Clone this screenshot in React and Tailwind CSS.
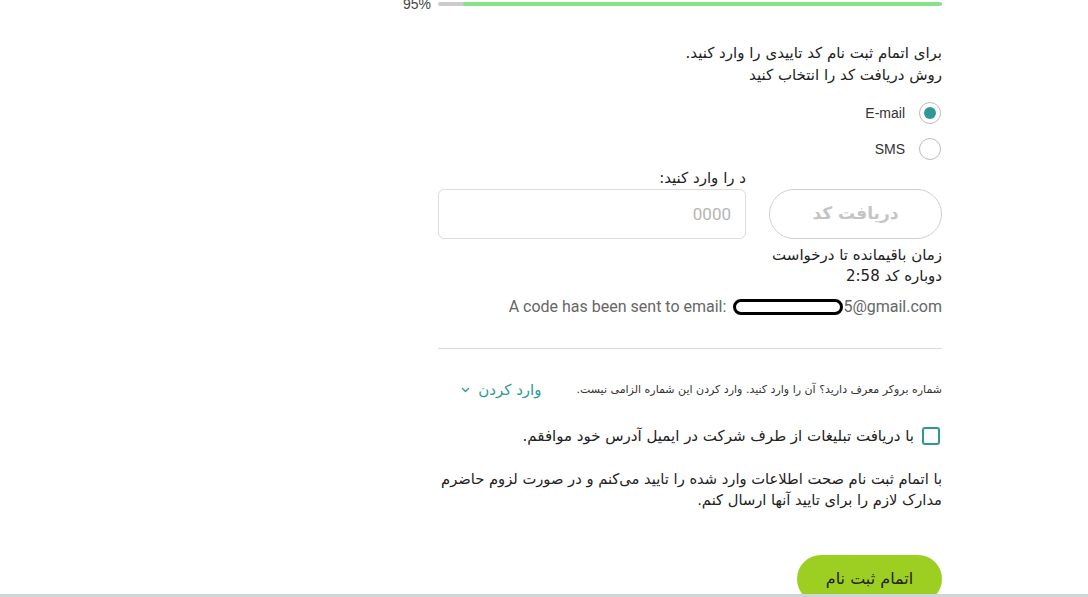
import React, { useState } from 'react';

const fa = { fontFamily: '"DejaVu Sans", Tahoma, sans-serif' };

const Radio = ({ label, checked, onClick }) => (
  <button onClick={onClick} className="flex items-center gap-[14px] h-[36px]">
    <span className="w-[22px] h-[22px] rounded-full border border-[#b9bcc4] flex items-center justify-center">
      {checked && <span className="w-[12px] h-[12px] rounded-full bg-[#2f9896]" />}
    </span>
    <span className="text-[14px] text-[#333] font-['Liberation_Sans',sans-serif]">{label}</span>
  </button>
);

const App = () => {
  const [method, setMethod] = useState('email');
  const [agree, setAgree] = useState(false);

  return (
    <div className="min-h-screen bg-white text-[#222] flex" style={fa}>
      {/* sidebar area (empty in this view) */}
      <aside className="w-[292px] shrink-0" />
      <main dir="rtl" className="flex-1 flex justify-center">
        <div className="w-[504px] -mt-[6px]">
          {/* progress */}
          <div className="relative h-[20px] flex items-center">
            <div className="w-full h-[4px] bg-[#cccccc] rounded-full overflow-hidden">
              <div className="h-full bg-[#86e388] rounded-full" style={{ width: '95%' }} />
            </div>
            <span className="absolute right-full mr-[7px] text-[14px] text-[#444] font-['Liberation_Sans',sans-serif]" dir="ltr">95%</span>
          </div>

          <p className="mt-[28px] text-[15px] leading-[22px]">
            برای اتمام ثبت نام کد تاییدی را وارد کنید.
            <br />
            روش دریافت کد را انتخاب کنید
          </p>

          <div className="mt-[9px] flex flex-col items-start mr-[1px]">
            <Radio label="E-mail" checked={method === 'email'} onClick={() => setMethod('email')} />
            <Radio label="SMS" checked={method === 'sms'} onClick={() => setMethod('sms')} />
          </div>

          <div className="mt-0 flex gap-[23px]">
            <div className="w-[173px] flex flex-col">
              <div className="h-[22px]" />
              <button className="h-[50px] rounded-full border border-[#cfcfcf] text-[17px] font-bold text-[#c4c4c4]">
                دریافت کد
              </button>
              <p className="mt-[6px] text-[15px] leading-[21px]">
                زمان باقیمانده تا درخواست دوباره کد 2:58
              </p>
            </div>
            <div className="flex-1 flex flex-col overflow-hidden">
              <label className="h-[22px] text-[15px] leading-[22px] whitespace-nowrap overflow-hidden">د را وارد کنید:</label>
              <input
                dir="ltr"
                placeholder="0000"
                className="h-[50px] w-full rounded-[6px] border border-[#dcdcdc] px-[14px] text-right text-[17px] placeholder:text-[#b5b5b5] outline-none font-['Roboto',sans-serif]"
              />
            </div>
          </div>

          <p dir="ltr" className="mt-[8px] text-[16px] text-[#666] font-['Roboto',sans-serif] flex items-center justify-end">
            A code has been sent to email:
            <span className="inline-block w-[110px] h-[16px] rounded-full border-[3px] border-black ml-[7px]" />
            5@gmail.com
          </p>

          <hr className="mt-[29px] border-0 h-px bg-[#d9d9d9]" />

          <div className="mt-[30px] flex items-center gap-[35px]">
            <span className="text-[11px] text-[#333] whitespace-nowrap">شماره بروکر معرف دارید؟ آن را وارد کنید. وارد کردن این شماره الزامی نیست.</span>
            <button className="flex items-center gap-[8px] text-[15px] text-[#2c9a98] whitespace-nowrap">
              وارد کردن
              <svg width="9" height="6" viewBox="0 0 9 6" fill="none" stroke="#2c9a98" strokeWidth="1.3">
                <path d="M1 1l3.5 3.5L8 1" />
              </svg>
            </button>
          </div>

          <label className="mt-[23px] flex items-center gap-[8px] mr-[2px] cursor-pointer">
            <span
              onClick={() => setAgree(!agree)}
              className="w-[18px] h-[18px] rounded-[3px] border-2 border-[#2f9896] flex items-center justify-center"
            >
              {agree && <span className="w-[8px] h-[8px] bg-[#2f9896]" />}
            </span>
            <span className="text-[15px]">با دریافت تبلیغات از طرف شرکت در ایمیل آدرس خود موافقم.</span>
          </label>

          <p className="mt-[21px] text-[14.7px] leading-[21px]">
            با اتمام ثبت نام صحت اطلاعات وارد شده را تایید می‌کنم و در صورت لزوم حاضرم مدارک لازم را برای تایید آنها ارسال کنم.
          </p>

          <button className="mt-[45px] w-[145px] h-[48px] rounded-full bg-[#9ccf22] text-[16px] text-[#222]">
            اتمام ثبت نام
          </button>
          <div className="h-[40px]" />
        </div>
      </main>
      <div className="fixed bottom-0 left-0 right-0 h-[3px] bg-[#cfd6d6]" />
    </div>
  );
};

export default App;
